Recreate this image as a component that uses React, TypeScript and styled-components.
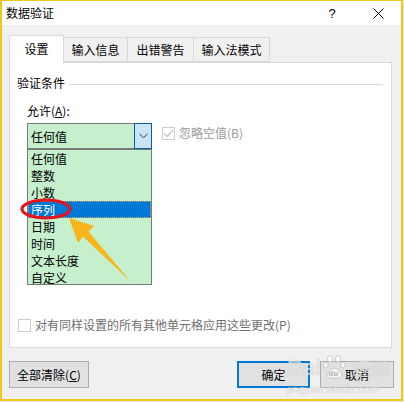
import React from "react";
import styled, { createGlobalStyle } from "styled-components";

const GlobalStyle = createGlobalStyle`
  * { box-sizing: border-box; }
  body {
    margin: 0;
    background: #e4eadc;
    font-family: "Noto Sans CJK SC", "Microsoft YaHei", sans-serif;
    font-size: 12px;
    color: #000;
  }
`;

const Window = styled.div`
  position: relative;
  width: 403px;
  height: 401px;
  border: 2px solid #ecc91a;
  border-top-width: 1px;
  background: #f0f0f0;
  display: flex;
  flex-direction: column;
  overflow: hidden;
`;

const TitleBar = styled.div`
  height: 24px;
  background: #fff;
  display: flex;
  align-items: center;
`;

const Title = styled.div`
  flex: 1;
  padding-left: 4px;
  line-height: 16px;
`;

const TitleButton = styled.div`
  width: 46px;
  height: 24px;
  display: flex;
  align-items: center;
  justify-content: center;
  font-family: "Liberation Sans", sans-serif;
  font-size: 13px;
`;

const Body = styled.div`
  flex: 1;
  display: flex;
  flex-direction: column;
  padding: 10px 7px 0 7px;
`;

const TabRow = styled.div`
  display: flex;
  align-items: flex-end;
  height: 27px;
`;

const Tab = styled.div<{ $active?: boolean; $w: number }>`
  position: relative;
  z-index: ${(p) => (p.$active ? 1 : 0)};
  width: ${(p) => p.$w}px;
  height: ${(p) => (p.$active ? 28 : 25)}px;
  margin-bottom: ${(p) => (p.$active ? -1 : 0)}px;
  margin-left: ${(p) => (p.$active ? 0 : -1)}px;
  background: ${(p) => (p.$active ? "#fff" : "#f0f0f0")};
  border: 1px solid #d9d9d9;
  border-bottom: ${(p) => (p.$active ? "none" : "1px solid #d9d9d9")};
  display: flex;
  align-items: center;
  justify-content: center;
  padding-bottom: ${(p) => (p.$active ? 2 : 0)}px;
  line-height: 16px;
  &:first-child { margin-left: 0; }
`;

const Panel = styled.div`
  width: 383px;
  height: 286px;
  background: #fff;
  border: 1px solid #d9d9d9;
  display: flex;
  flex-direction: column;
`;

const GroupHeader = styled.div`
  margin-top: 12px;
  padding: 0 8px 0 7px;
  display: flex;
  align-items: center;
  gap: 4px;
  line-height: 16px;
  &::after {
    content: "";
    flex: 1;
    height: 1px;
    margin-top: 2px;
    background: #dcdcdc;
  }
`;

const FieldLabel = styled.div`
  margin-top: 12px;
  padding-left: 17px;
  line-height: 16px;
`;

const Key = styled.span`
  text-decoration: underline;
`;

const ComboRow = styled.div`
  margin-top: 4px;
  padding-left: 17px;
  display: flex;
  align-items: flex-start;
  gap: 10px;
`;

const ComboWrap = styled.div`
  position: relative;
  width: 125px;
`;

const Combo = styled.div`
  height: 26px;
  display: flex;
  background: #c6efce;
  border: 1px solid #7a7a7a;
`;

const ComboText = styled.div`
  flex: 1;
  padding-left: 3px;
  display: flex;
  align-items: center;
`;

const ComboButton = styled.div`
  width: 18px;
  margin: -1px -1px -1px 0;
  background: #cce4f7;
  border: 1px solid #0a5ea8;
  display: flex;
  align-items: center;
  justify-content: center;
`;

const DropList = styled.div`
  position: absolute;
  left: 0;
  top: 26px;
  width: 125px;
  height: 136px;
  background: #c6efce;
  border: 1px solid #7a7a7a;
  z-index: 2;
`;

const ListItem = styled.div<{ $selected?: boolean }>`
  height: 17px;
  padding-left: 3px;
  display: flex;
  align-items: center;
  line-height: 15px;
  background: ${(p) => (p.$selected ? "#0078d7" : "transparent")};
  color: ${(p) => (p.$selected ? "#fff" : "#000")};
  outline: ${(p) => (p.$selected ? "1px dotted #d9a35a" : "none")};
  outline-offset: -1px;
`;

const CheckLine = styled.label<{ $tone: string }>`
  display: flex;
  align-items: center;
  gap: 4px;
  color: ${(p) => p.$tone};
  line-height: 14px;
`;

const IgnoreLine = styled(CheckLine)`
  margin-top: 3px;
`;

const FooterLine = styled(CheckLine)`
  margin-top: auto;
  margin-bottom: 15px;
  padding-left: 8px;
`;

const Box = styled.span`
  width: 13px;
  height: 13px;
  border: 1px solid #cccccc;
  background: #fff;
  display: flex;
  align-items: center;
  justify-content: center;
`;

const ButtonRow = styled.div`
  margin-top: 13px;
  display: flex;
  align-items: center;
  gap: 10px;
`;

const Button = styled.div<{ $w: number; $default?: boolean }>`
  width: ${(p) => p.$w}px;
  height: 27px;
  background: #e1e1e1;
  border: ${(p) => (p.$default ? "2px solid #0078d7" : "1px solid #adadad")};
  display: flex;
  align-items: center;
  justify-content: center;
  line-height: 16px;
`;

const Spacer = styled.div`
  flex: 1;
`;

const Overlay = styled.svg`
  position: absolute;
  left: -2px;
  top: -1px;
  z-index: 5;
  pointer-events: none;
`;

const Watermark = styled.div`
  position: absolute;
  left: 285px;
  top: 353px;
  z-index: 6;
  pointer-events: none;
  color: rgba(255, 255, 255, 0.6);
  text-shadow: 0 0 1px rgba(120, 120, 120, 0.45);
  font-family: "Liberation Sans", "Noto Sans CJK SC", sans-serif;
`;

const MarkTop = styled.div`
  display: flex;
  align-items: flex-end;
  gap: 2px;
  font-size: 22px;
  font-weight: bold;
  line-height: 24px;
`;

const MarkCn = styled.span`
  font-family: "Noto Sans CJK SC", sans-serif;
  font-size: 19px;
  font-weight: normal;
  margin-left: 3px;
`;

const MarkUrl = styled.div`
  font-size: 11px;
  line-height: 13px;
  margin-top: 3px;
  letter-spacing: 0.2px;
`;

const items = ["任何值", "整数", "小数", "序列", "日期", "时间", "文本长度", "自定义"];

export default function App() {
  return (
    <>
      <GlobalStyle />
      <Window>
        <TitleBar>
          <Title>数据验证</Title>
          <TitleButton>?</TitleButton>
          <TitleButton>
            <svg width="11" height="11" viewBox="0 0 11 11">
              <path d="M0.5 0.5 L10.5 10.5 M10.5 0.5 L0.5 10.5" stroke="#000" strokeWidth="1" />
            </svg>
          </TitleButton>
        </TitleBar>
        <Body>
          <TabRow>
            <Tab $active $w={55}>设置</Tab>
            <Tab $w={65}>输入信息</Tab>
            <Tab $w={67}>出错警告</Tab>
            <Tab $w={77}>输入法模式</Tab>
          </TabRow>
          <Panel>
            <GroupHeader>验证条件</GroupHeader>
            <FieldLabel>
              允许(<Key>A</Key>):
            </FieldLabel>
            <ComboRow>
              <ComboWrap>
                <Combo>
                  <ComboText>任何值</ComboText>
                  <ComboButton>
                    <svg width="9" height="6" viewBox="0 0 9 6">
                      <polyline points="0.5,0.8 4.5,4.8 8.5,0.8" fill="none" stroke="#333" strokeWidth="1" />
                    </svg>
                  </ComboButton>
                </Combo>
                <DropList>
                  {items.map((it) => (
                    <ListItem key={it} $selected={it === "序列"}>
                      {it}
                    </ListItem>
                  ))}
                </DropList>
              </ComboWrap>
              <IgnoreLine $tone="#9b9b9b">
                <Box>
                  <svg width="11" height="9" viewBox="0 0 11 9">
                    <polyline points="1,4.5 4,7.5 10,1" fill="none" stroke="#c4c4c4" strokeWidth="1.3" />
                  </svg>
                </Box>
                忽略空值(B)
              </IgnoreLine>
            </ComboRow>
            <FooterLine $tone="#6f6f6f">
              <Box />
              对有同样设置的所有其他单元格应用这些更改(P)
            </FooterLine>
          </Panel>
          <ButtonRow>
            <Button $w={80}>
              全部清除(<Key>C</Key>)
            </Button>
            <Spacer />
            <Button $w={73} $default>
              确定
            </Button>
            <Button $w={74}>取消</Button>
          </ButtonRow>
        </Body>
        <Overlay width="404" height="402" viewBox="0 0 404 402">
          <ellipse cx="46" cy="209" rx="24" ry="9" fill="none" stroke="#e8141c" strokeWidth="3.2" />
          <polygon
            points="69,218 94,226 88.5,231.5 131,282 83,236.5 78,243"
            fill="#f9b51c"
          />
        </Overlay>
        <Watermark>
          <MarkTop>
            Bai
            <svg width="24" height="26" viewBox="0 0 24 26">
              <g fill="rgba(255,255,255,0.7)" stroke="rgba(120,120,120,0.4)" strokeWidth="0.8">
                <ellipse cx="7" cy="5" rx="2.6" ry="3.4" />
                <ellipse cx="15" cy="5" rx="2.6" ry="3.4" />
                <ellipse cx="2.8" cy="11" rx="2.3" ry="3" />
                <ellipse cx="20" cy="11" rx="2.3" ry="3" />
                <path d="M4 20 Q11 8 19 20 Q19 25 11 24 Q4 25 4 20 Z" />
              </g>
              <text x="5.5" y="22" fontSize="8" fontFamily="Liberation Sans, sans-serif" fontWeight="bold" fill="rgba(150,150,150,0.55)">
                du
              </text>
            </svg>
            <MarkCn>经验</MarkCn>
          </MarkTop>
          <MarkUrl>jingyan.baidu.com</MarkUrl>
        </Watermark>
      </Window>
    </>
  );
}
